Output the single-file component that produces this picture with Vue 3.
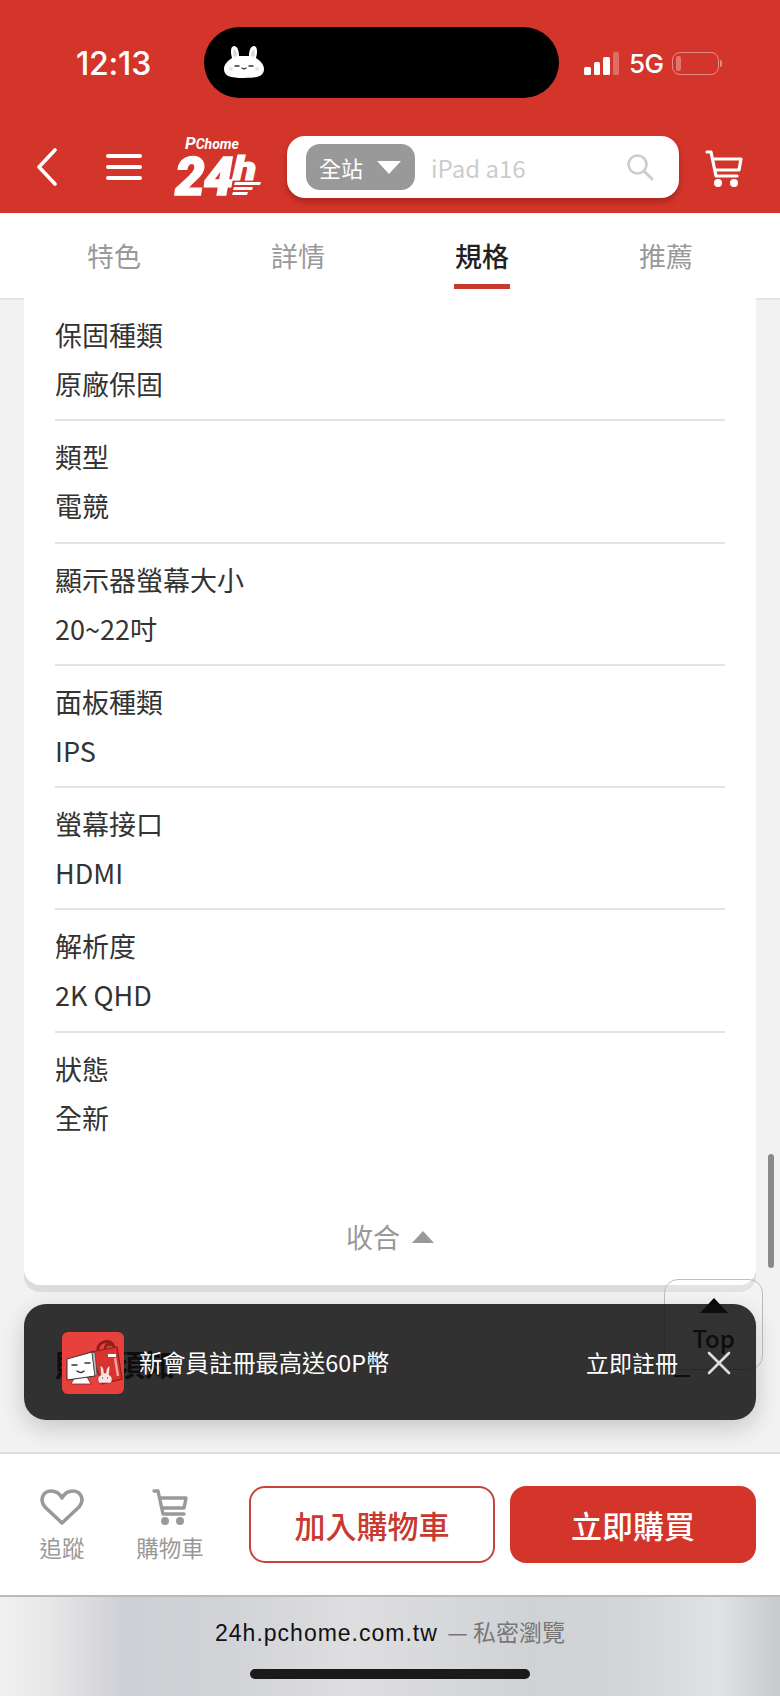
<script setup>
const tabs = [
  { name: '特色' },
  { name: '詳情' },
  { name: '規格', active: true },
  { name: '推薦' },
]
const specs = [
  ['保固種類', '原廠保固'],
  ['類型', '電競'],
  ['顯示器螢幕大小', '20~22吋'],
  ['面板種類', 'IPS'],
  ['螢幕接口', 'HDMI'],
  ['解析度', '2K QHD'],
  ['狀態', '全新'],
]
</script>

<template>
  <div class="phone">
    <header class="head">
      <div class="status">
        <span class="time">12:13</span>
        <div class="island">
          <svg class="bunny" viewBox="0 0 42 34" width="42" height="34">
            <path d="M9 13C7 6 8 1 11 1s5 4 5 10h10c0-6 2-10 5-10s4 5 2 12c5 3 8 7 8 11 0 7-6 9-20 9S1 31 1 24c0-4 3-8 8-11z" fill="#fff"/>
            <path d="M11 12c-1-4-1-7 0-8 2 1 3 4 3 7zM31 12c1-4 1-7 0-8-2 1-3 4-3 7z" fill="#e6d3d8"/>
            <path d="M12 21h4M26 21h4M19 23l2 1 2-1" stroke="#333" stroke-width="1.3" fill="none" stroke-linecap="round"/>
            <circle cx="8" cy="24" r="2" fill="#f1dfe2"/><circle cx="34" cy="24" r="2" fill="#f1dfe2"/>
          </svg>
        </div>
        <div class="signal"><i class="b1"></i><i class="b2"></i><i class="b3"></i><i class="b4"></i></div>
        <span class="net">5G</span>
        <div class="battery"><i></i></div>
        <span class="nub"></span>
      </div>
      <div class="nav">
        <svg class="back" width="22" height="38" viewBox="0 0 22 38"><path d="M19 2 3 19l16 17" fill="none" stroke="#fff" stroke-width="3.6" stroke-linecap="round" stroke-linejoin="round"/></svg>
        <div class="burger"><i></i><i></i><i></i></div>
        <svg class="logo" width="92" height="64" viewBox="0 0 92 64">
          <text x="10" y="15" class="lg-p">P<tspan class="lg-c">Chome</tspan></text>
          <text x="0" y="61" class="lg-24">24</text>
          <text transform="translate(58 46) scale(1.3 1)" class="lg-h">h</text>
          <path d="M60 48h26l-1 3H59zM59 53h19l-1 3H58zM58 58h15l-1 3H57z" fill="#fff"/>
        </svg>
        <div class="search">
          <div class="scope"><span>全站</span><i class="tri-down"></i></div>
          <span class="ph">iPad a16</span>
          <svg class="mag" width="28" height="28" viewBox="0 0 28 28"><circle cx="11.5" cy="11.5" r="9" fill="none" stroke="#ccc" stroke-width="2.6"/><path d="m18 18 8 8" stroke="#ccc" stroke-width="3" stroke-linecap="round"/></svg>
        </div>
        <svg class="cart" width="38" height="40" viewBox="0 0 38 40">
          <path d="M2 3h4l5 24h21M8 10h28l-2 11H10" fill="none" stroke="#fff" stroke-width="3.2" stroke-linecap="round" stroke-linejoin="round"/>
          <circle cx="13" cy="34" r="4" fill="#fff"/><circle cx="29" cy="34" r="4" fill="#fff"/>
        </svg>
      </div>
    </header>

    <nav class="tabs">
      <div v-for="t in tabs" :key="t.name" class="tab" :class="{ active: t.active }">
        <span>{{ t.name }}</span>
      </div>
    </nav>

    <main class="main">
      <section class="card">
        <div v-for="s in specs" :key="s[0]" class="row">
          <div class="line">{{ s[0] }}</div>
          <div class="line">{{ s[1] }}</div>
        </div>
        <div class="fold"><span>收合</span><i class="tri-up"></i></div>
      </section>
      <div class="next">
        <span>販售須知</span>
        <i class="dash"></i>
      </div>

      <div class="scrollbar"></div>
      <div class="top"><i class="tri-top"></i><span>Top</span></div>
      <div class="promo">
        <svg class="mascot" width="62" height="62" viewBox="0 0 62 62">
          <rect width="62" height="62" rx="6" fill="#e8403d"/>
          <path d="M29 20 55 15l5 32-20 5z" fill="#d9332f" stroke="#8c1f1c" stroke-width="1.2"/>
          <path d="M36 18c-1-9 14-12 16-3" fill="none" stroke="#8c1f1c" stroke-width="3"/>
          <path d="M43 17c0-5 5-6 6-3" fill="none" stroke="#8c1f1c" stroke-width="2.4"/>
          <rect x="46" y="22" width="8" height="3" fill="#fff"/>
          <path d="M53 26l3 18" stroke="#f2a5a2" stroke-width="2.4"/>
          <path d="M13 45h12l4 7H9z" fill="#fff" stroke="#8c1f1c" stroke-width=".8"/>
          <path d="M5 27 30 20l3 24-28 4z" fill="#fff" stroke="#333" stroke-width="1"/>
          <path d="M30 20l3 1 2 22-2 1z" fill="#bdbdbd" stroke="#333" stroke-width=".6"/>
          <path d="M10 33h5M23 31h5M15 39q4 3 7 0" stroke="#333" stroke-width="1.5" fill="none" stroke-linecap="round"/>
          <path d="M37 51c-2-4-1-7 2-8l-1-9c3 0 4 3 4 7h2c0-4 2-7 4-7l-1 9c3 1 4 4 2 8z" fill="#fbe3e3" stroke="#b5302c" stroke-width=".6"/>
          <path d="M40 46h1M45 46h1" stroke="#333" stroke-width="1.2"/>
        </svg>
        <span class="promo-text">新會員註冊最高送60P幣</span>
        <span class="promo-go">立即註冊</span>
        <svg class="close" width="24" height="24" viewBox="0 0 24 24"><path d="m2 2 20 20M22 2 2 22" stroke="#ddd" stroke-width="2.6" stroke-linecap="round"/></svg>
      </div>
    </main>

    <footer class="actions">
      <div class="act">
        <svg width="44" height="38" viewBox="0 0 44 38"><path d="M22 35 5 19C-1 12 3 3 11 3c5 0 9 3 11 7 2-4 6-7 11-7 8 0 12 9 6 16z" fill="none" stroke="#999" stroke-width="3.6" stroke-linejoin="round"/></svg>
        <span>追蹤</span>
      </div>
      <div class="act act-cart">
        <svg width="36" height="38" viewBox="0 0 36 38">
          <path d="M2 3h4l5 23h21M8 10h26l-2 10H10" fill="none" stroke="#999" stroke-width="3.4" stroke-linecap="round" stroke-linejoin="round"/>
          <circle cx="13" cy="33" r="4" fill="#999"/><circle cx="28" cy="33" r="4" fill="#999"/>
        </svg>
        <span>購物車</span>
      </div>
      <button class="btn add">加入購物車</button>
      <button class="btn buy">立即購買</button>
    </footer>

    <div class="browser">
      <div class="url">24h.pchome.com.tw <em>— 私密瀏覽</em></div>
      <div class="home"></div>
    </div>
  </div>
</template>

<style scoped>
.phone {
  position: relative;
  width: 780px;
  height: 1696px;
  display: flex;
  flex-direction: column;
  overflow: hidden;
  background: #f2f2f2;
  font-family: "Noto Sans CJK TC", "Noto Sans", sans-serif;
}
i { display: block; }

/* header */
.head { height: 213px; background: #d4352a; flex: none; }
.status { height: 136px; display: flex; align-items: flex-start; position: relative; }
.time {
  margin: 45px 0 0 76px; width: 128px;
  font: 500 32px/38px Inter, sans-serif; color: #fff; letter-spacing: -.2px;
}
.island {
  margin-top: 27px; width: 355px; height: 71px; border-radius: 36px;
  background: #000; display: flex; align-items: flex-start; padding: 18px 0 0 19px; box-sizing: border-box;
}
.signal { margin: 52px 0 0 25px; width: 36px; height: 23px; display: flex; align-items: flex-end; gap: 3px; }
.signal i { width: 6.5px; background: #fff; border-radius: 1.5px; }
.b1 { height: 8px; } .b2 { height: 13px; } .b3 { height: 18px; }
.signal .b4 { height: 23px; background: rgba(255,255,255,.28); }
.net { margin: 44px 0 0 9px; font: 500 26px/40px Inter, sans-serif; color: #fff; width: 34px; letter-spacing: -.5px; }
.battery {
  margin: 52px 0 0 9px; width: 47px; height: 23px; box-sizing: border-box;
  border: 1.5px solid rgba(255,255,255,.42); border-radius: 8px; padding: 3px;
}
.battery i { width: 5px; height: 100%; background: rgba(255,255,255,.32); border-radius: 2px; }
.nub { margin: 60px 0 0 1px; width: 2px; height: 7px; background: rgba(255,255,255,.42); border-radius: 0 2px 2px 0; }

.nav { height: 62px; display: flex; align-items: center; }
.back { margin-left: 36px; }
.burger { margin-left: 48px; width: 36px; display: flex; flex-direction: column; gap: 7.5px; }
.burger i { height: 3.6px; background: #fff; border-radius: 2px; }
.logo { margin: -2px 0 0 33px; overflow: visible; }
.lg-p { font: italic 700 17px "Roboto", sans-serif; fill: #fff; }
.lg-c { font: italic 700 14px "Roboto", sans-serif; fill: #fff; }
.lg-24 { font: italic 900 53px "Roboto", sans-serif; fill: #fff; stroke: #fff; stroke-width: 1.4px; letter-spacing: -1px; }
.lg-h { font: italic 900 33px "Roboto", sans-serif; fill: #fff; stroke: #fff; stroke-width: 1px; }
.search {
  margin-left: 20px; width: 392px; height: 62px; box-sizing: border-box;
  background: #fff; border-radius: 18px; box-shadow: 0 4px 6px rgba(90,10,5,.35);
  display: flex; align-items: center; padding-left: 19px;
}
.scope {
  width: 109px; height: 46px; border-radius: 14px; background: #999; color: #fff;
  display: flex; align-items: center; padding-left: 13px; box-sizing: border-box; gap: 14px;
  font-size: 22px;
}
.tri-down { width: 0; height: 0; border: 12px solid transparent; border-top: 13px solid #fff; border-bottom: 0; }
.ph { margin-left: 16px; font-size: 24px; color: #ccc; flex: 1; }
.mag { margin-right: 25px; }
.cart { margin-left: 26px; margin-top: 4px; }

/* tabs */
.tabs {
  height: 87px; flex: none; background: #fff; display: grid; grid-template-columns: repeat(4, 1fr);
  padding: 0 22px; border-bottom: 2px solid #e4e4e4; box-sizing: border-box;
}
.tab { display: flex; justify-content: center; padding-top: 21px; font-size: 27px; line-height: 44px; color: #999; }
.tab span { height: 50px; align-self: flex-start; border-bottom: 5px solid transparent; padding: 0 1px; }
.tab.active { color: #222; font-weight: 500; }
.tab.active span { border-bottom-color: #c8392f; }

/* main */
.main { position: relative; flex: 1; min-height: 0; }
.card {
  margin: -2px 24px 0; background: #fff; border-radius: 0 0 16px 16px;
  box-shadow: 0 7px 0 #dcdcdc; padding: 1px 31px 0; height: 987px; box-sizing: border-box;
}
.row { padding: 11px 0 11.3px; border-bottom: 2px solid #e4e4e4; }
.row:nth-child(7) { border-bottom: 0; }
.line { font-size: 27px; line-height: 49px; color: #333; }
.fold {
  margin-top: 64px; display: flex; justify-content: center; align-items: center; gap: 12px;
  font-size: 27px; line-height: 40px; color: #999;
}
.tri-up { width: 0; height: 0; border: 11px solid transparent; border-bottom: 12px solid #999; border-top: 0; }
.next {
  display: flex; justify-content: space-between; align-items: flex-end;
  margin: 56px 90px 0 55px; height: 44px;
  font-size: 30px; font-weight: 700; color: #000; line-height: 44px;
}
.dash { width: 16px; height: 2px; background: #000; margin-bottom: 8px; }

.scrollbar { position: absolute; left: 768px; top: 854px; width: 6px; height: 114px; border-radius: 3px; background: #8a8a8a; }
.top {
  position: absolute; left: 664px; top: 979px; width: 99px; height: 91px; box-sizing: border-box;
  border: 1px solid #bdbdbd; border-radius: 14px; background: rgba(255,255,255,.2);
  display: flex; flex-direction: column; align-items: center; padding-top: 18px;
  font-size: 24px; font-weight: 500; color: #000; line-height: 34px;
}
.tri-top { width: 0; height: 0; border: 14px solid transparent; border-bottom: 15px solid #000; border-top: 0; margin-bottom: 8px; }
.promo {
  position: absolute; left: 24px; top: 1004px; width: 732px; height: 116px; box-sizing: border-box;
  background: rgba(15,15,15,.85); border-radius: 22px; box-shadow: 0 8px 24px rgba(0,0,0,.18);
  display: flex; align-items: center; padding: 0 25px 0 38px; color: #fff;
}
.mascot { flex: none; margin-top: 2px; }
.promo-text { margin-left: 15px; font-size: 23.3px; flex: 1; }
.promo-go { font-size: 23px; }
.close { margin-left: 29px; margin-top: 2px; }

/* actions */
.actions {
  height: 143px; flex: none; background: #fff; border-top: 2px solid #ddd; box-sizing: border-box;
  display: flex; align-items: center; padding: 0 24px 0 0;
}
.act { width: 124px; flex: none; display: flex; flex-direction: column; align-items: center; gap: 6px; color: #999; font-size: 22.5px; line-height: 30px; }
.act-cart { width: 92px; }
.act svg { display: block; }
.btn {
  width: 246px; height: 77px; flex: none; border-radius: 16px; box-sizing: border-box;
  font-family: inherit; font-size: 31px; font-weight: 500; padding: 0;
}
.add { margin-left: 33px; background: #fff; border: 2px solid #c8433c; color: #c8392f; }
.buy { margin-left: 15px; background: #d4352a; border: 0; color: #fff; }

/* browser */
.browser {
  height: 101px; flex: none; box-sizing: border-box; border-top: 2px solid #bbb;
  background: linear-gradient(90deg, #f0f0f0 0%, #e8e8e9 6%, #cfd0d5 16%, #d2d3d7 30%, #dedee0 45%, #d0d2d6 68%, #d2d4d8 80%, #e0e2e5 92%, #c9cacd 100%);
  display: flex; flex-direction: column; align-items: center;
}
.url { margin-top: 15px; font: 400 23px/38px "Liberation Sans", "Noto Sans CJK TC", sans-serif; color: #111; letter-spacing: 1px; }
.url em { font-style: normal; color: #777; font-family: "Noto Sans CJK TC", sans-serif; letter-spacing: 0; margin-left: 2px; }
.home { margin-top: 17px; width: 280px; height: 10px; border-radius: 5px; background: #1a1a1a; }
</style>
